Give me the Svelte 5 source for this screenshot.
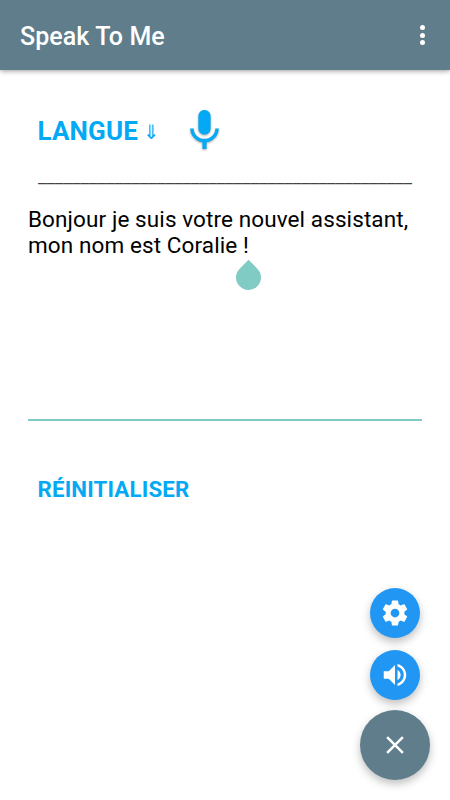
<script lang="ts">
  const rule = '_'.repeat(44);
  let message = 'Bonjour je suis votre nouvel assistant,\nmon nom est Coralie !';
  let open = true;

  function reset() {
    message = '';
  }
</script>

<div class="screen">
  <header>
    <h1>Speak To Me</h1>
    <button class="more" aria-label="Menu">
      <span></span><span></span><span></span>
    </button>
  </header>

  <main>
    <div class="language">
      <button class="link choose">LANGUE<span class="arrow">⇓</span></button>
      <button class="mic" aria-label="Micro">
        <svg viewBox="0 0 24 24" width="49" height="49">
          <path d="M12 14c1.66 0 2.99-1.34 2.99-3L15 5c0-1.66-1.34-3-3-3S9 3.34 9 5v6c0 1.66 1.34 3 3 3zm5.3-3c0 3-2.54 5.1-5.3 5.1S6.7 14 6.7 11H5c0 3.41 2.72 6.23 6 6.72V21h2v-3.28c3.28-.48 6-3.3 6-6.72h-1.7z" />
        </svg>
      </button>
    </div>

    <div class="rule">{rule}</div>

    <div class="field">
      <p>{message}<span class="caret"><span class="handle"></span></span></p>
    </div>

    <button class="link reset" on:click={reset}>RÉINITIALISER</button>
  </main>

  <div class="fabs">
    {#if open}
      <button class="fab" aria-label="Réglages">
        <svg viewBox="0 0 24 24" width="30" height="30">
          <path d="M19.43 12.98c.04-.32.07-.64.07-.98s-.03-.66-.07-.98l2.11-1.65c.19-.15.24-.42.12-.64l-2-3.46c-.12-.22-.39-.3-.61-.22l-2.49 1c-.52-.4-1.08-.73-1.69-.98l-.38-2.65C14.46 2.18 14.25 2 14 2h-4c-.25 0-.46.18-.49.42l-.38 2.65c-.61.25-1.17.59-1.69.98l-2.49-1c-.23-.09-.49 0-.61.22l-2 3.46c-.13.22-.07.49.12.64l2.11 1.65c-.04.32-.07.65-.07.98s.03.66.07.98l-2.11 1.65c-.19.15-.24.42-.12.64l2 3.46c.12.22.39.3.61.22l2.49-1c.52.4 1.08.73 1.69.98l.38 2.65c.03.24.24.42.49.42h4c.25 0 .46-.18.49-.42l.38-2.65c.61-.25 1.17-.59 1.69-.98l2.49 1c.23.09.49 0 .61-.22l2-3.46c.12-.22.07-.49-.12-.64l-2.11-1.65zM12 15.5c-1.93 0-3.5-1.57-3.5-3.5s1.57-3.5 3.5-3.5 3.5 1.57 3.5 3.5-1.57 3.5-3.5 3.5z" />
        </svg>
      </button>
      <button class="fab" aria-label="Volume">
        <svg viewBox="0 0 24 24" width="30" height="30">
          <path d="M3 9v6h4l5 5V4L7 9H3zm13.5 3c0-1.77-1.02-3.29-2.5-4.03v8.05c1.48-.73 2.5-2.25 2.5-4.02zM14 3.23v2.06c2.89.86 5 3.54 5 6.71s-2.11 5.85-5 6.71v2.06c4.01-.91 7-4.49 7-8.77s-2.99-7.86-7-8.77z" />
        </svg>
      </button>
    {/if}
    <button class="fab main" aria-label="Fermer" on:click={() => (open = !open)}>
      <svg viewBox="0 0 24 24" width="30" height="30">
        <path d="M19 6.41L17.59 5 12 10.59 6.41 5 5 6.41 10.59 12 5 17.59 6.41 19 12 13.41 17.59 19 19 17.59 13.41 12z" />
      </svg>
    </button>
  </div>
</div>

<style>
  :global(body) {
    margin: 0;
    background: #fff;
    font-family: Roboto, "Liberation Sans", sans-serif;
  }

  .screen {
    position: relative;
    height: 800px;
    overflow: hidden;
  }

  header {
    display: flex;
    align-items: center;
    justify-content: space-between;
    height: 70px;
    padding: 0 20px;
    box-sizing: border-box;
    background: #607d8b;
    box-shadow: 0 1px 5px rgba(0, 0, 0, 0.4);
  }

  h1 {
    margin: 4px 0 0;
    color: #fff;
    font-size: 25px;
    font-weight: 500;
    line-height: 30px;
    letter-spacing: 0.08px;
  }

  button {
    padding: 0;
    border: none;
    background: none;
    font-family: inherit;
    cursor: pointer;
  }

  svg {
    display: block;
    fill: currentColor;
  }

  .more {
    display: flex;
    flex-direction: column;
    gap: 2.5px;
    margin-right: 5px;
  }

  .more span {
    width: 5px;
    height: 5px;
    border-radius: 50%;
    background: #fff;
  }

  main {
    padding: 36px 28px 0;
  }

  .language {
    display: flex;
    align-items: center;
    height: 49px;
    padding-left: 9.5px;
  }

  .link {
    color: #03a9f4;
    font-size: 26px;
    font-weight: 700;
    line-height: 30px;
    letter-spacing: 0.15px;
    white-space: nowrap;
  }

  .choose {
    display: flex;
    align-items: center;
    width: 122px;
  }

  .arrow {
    margin: 3px 0 0 5px;
    font-family: "DejaVu Sans", sans-serif;
    font-size: 20px;
    font-weight: 400;
    line-height: 24px;
  }

  .mic {
    margin-left: 20px;
    color: #03a9f4;
    filter: drop-shadow(0 1px 1px rgba(0, 0, 0, 0.35));
  }

  .rule {
    height: 24px;
    margin: 10px 0 0 10px;
    color: #444;
    font-size: 18.85px;
    line-height: 24px;
    white-space: nowrap;
  }

  .field {
    height: 213px;
    margin-top: 17px;
    border-bottom: 2px solid #80cbc4;
  }

  p {
    margin: 0;
    color: #000;
    font-size: 22.5px;
    line-height: 26px;
    letter-spacing: 0.1px;
    white-space: pre;
  }

  .caret {
    position: relative;
  }

  /* text cursor handle hanging under the caret */
  .handle {
    position: absolute;
    top: 33px;
    left: -12.5px;
    width: 25px;
    height: 25px;
    border-radius: 0 50% 50% 50%;
    background: #80cbc4;
    transform: rotate(45deg);
  }

  .reset {
    margin: 53px 0 0 9.5px;
    font-size: 22.3px;
  }

  .fabs {
    position: absolute;
    right: 20px;
    bottom: 20px;
    display: flex;
    flex-direction: column;
    align-items: center;
  }

  .fab {
    display: flex;
    align-items: center;
    justify-content: center;
    width: 50px;
    height: 50px;
    margin-bottom: 12.5px;
    border-radius: 50%;
    background: #2196f3;
    color: #fff;
    box-shadow: 0 4px 8px rgba(0, 0, 0, 0.25);
  }

  .fab.main {
    width: 70px;
    height: 70px;
    margin: -2.5px 0 0;
    background: #607d8b;
  }
</style>
